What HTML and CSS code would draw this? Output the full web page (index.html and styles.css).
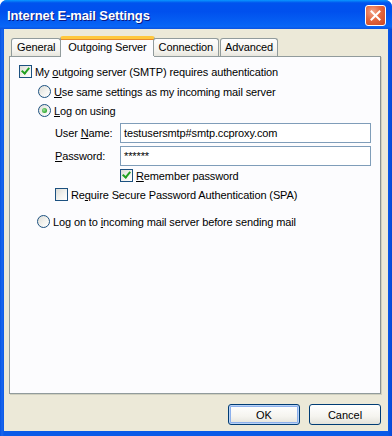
FILE: index.html
```html
<!DOCTYPE html>
<html lang="en">
<head>
    <meta charset="UTF-8">
    <title>Internet E-mail Settings</title>
    <link rel="stylesheet" href="styles.css">
</head>
<body>
    <div class="window">
        <div class="titlebar">
            <span class="title">Internet E-mail Settings</span>
            <button class="close-btn" aria-label="Close">
                <svg width="13" height="13" viewBox="0 0 13 13">
                    <path d="M2.5 2.5 L10.5 10.5 M10.5 2.5 L2.5 10.5" stroke="#fff" stroke-width="2" stroke-linecap="square"/>
                </svg>
            </button>
        </div>

        <div class="client">
            <div class="tabs">
                <div class="tab">General</div>
                <div class="tab active">Outgoing Server</div>
                <div class="tab">Connection</div>
                <div class="tab">Advanced</div>
            </div>

            <div class="panel">
                <label class="option">
                    <span class="checkbox checked"></span>
                    <span>My <u>o</u>utgoing server (SMTP) requires authentication</span>
                </label>

                <div class="group">
                    <label class="option">
                        <span class="radio"></span>
                        <span><u>U</u>se same settings as my incoming mail server</span>
                    </label>
                    <label class="option logon">
                        <span class="radio selected"></span>
                        <span><u>L</u>og on using</span>
                    </label>

                    <div class="fields">
                        <div class="field">
                            <span class="field-label">User <u>N</u>ame:</span>
                            <div class="textbox">testusersmtp#smtp.ccproxy.com</div>
                        </div>
                        <div class="field">
                            <span class="field-label"><u>P</u>assword:</span>
                            <div class="textbox">******</div>
                        </div>
                        <label class="option remember">
                            <span class="checkbox checked"></span>
                            <span><u>R</u>emember password</span>
                        </label>
                        <label class="option spa">
                            <span class="checkbox"></span>
                            <span>Re<u>q</u>uire Secure Password Authentication (SPA)</span>
                        </label>
                    </div>

                    <label class="option before">
                        <span class="radio"></span>
                        <span>Log on to <u>i</u>ncoming mail server before sending mail</span>
                    </label>
                </div>
            </div>

            <div class="buttons">
                <button class="btn default">OK</button>
                <button class="btn">Cancel</button>
            </div>
        </div>
    </div>
</body>
</html>
```

FILE: styles.css
```css
* {
    margin: 0;
    padding: 0;
    box-sizing: border-box;
}

body {
    background: #fff;
    font-family: "Liberation Sans", Arial, sans-serif;
    font-size: 11px;
    letter-spacing: -0.12px;
    color: #000;
}

u {
    text-decoration: underline;
    text-underline-offset: 1px;
}

.window {
    width: 392px;
    height: 436px;
    display: flex;
    flex-direction: column;
    background: linear-gradient(90deg, #0554e3 0, #1a66ee 2px, #0a5ae8 4px, #0a5ae8 388px, #0746d6 392px);
    border-radius: 7px 7px 0 0;
    overflow: hidden;
}

.titlebar {
    height: 29px;
    flex-shrink: 0;
    display: flex;
    align-items: center;
    justify-content: space-between;
    padding: 0 6px 0 7px;
    background: linear-gradient(#0997ff 0, #0053ee 10%, #0050ee 40%, #0663f5 85%, #0a66f6 92%, #0b52e0 100%);
}

.title {
    color: #fff;
    font-weight: bold;
    font-size: 13px;
    letter-spacing: -0.1px;
    text-shadow: 1px 1px #0a1883;
    padding-top: 1px;
}

.close-btn {
    width: 21px;
    height: 21px;
    border: 1px solid #fff;
    border-radius: 3px;
    background: radial-gradient(circle at 35% 30%, #f3a58b 0, #e3673f 45%, #cc4520 100%);
    display: flex;
    align-items: center;
    justify-content: center;
    margin-top: 1px;
}

.client {
    flex: 1;
    margin: 0 4px 5px 4px;
    background: #ece9d8;
    padding: 7px 7px 0 5px;
    display: flex;
    flex-direction: column;
}

.tabs {
    display: flex;
    align-items: flex-end;
    height: 21px;
    padding-left: 2px;
    position: relative;
    z-index: 1;
    margin-bottom: -1px;
}

.tab {
    height: 18px;
    padding: 2px 5px 0;
    border: 1px solid #919b9c;
    border-bottom: none;
    border-radius: 3px 3px 0 0;
    background: linear-gradient(#fefefe, #f4f3ee 70%, #e8e6de);
    margin-bottom: 1px;
    white-space: nowrap;
}

.tab + .tab {
    margin-left: 1px;
}

.tab:last-child {
    padding: 2px 4px 0;
}

.tab.active {
    height: 21px;
    margin: 0 -3px 0 -1px;
    padding: 0 7px;
    background: #fcfcfe;
    border-top: 3px solid #ffc83c;
    box-shadow: inset 0 1px #e68b2c;
    line-height: 16px;
}

.panel {
    height: 338px;
    flex-shrink: 0;
    background: #fcfcfe;
    border: 1px solid #919b9c;
    border-right-color: #8a9293;
    padding: 8px 9px;
    box-shadow: 1px 1px #d0d0bf;
}

.option {
    display: flex;
    align-items: center;
    gap: 3px;
    height: 13px;
    white-space: nowrap;
}

.group {
    padding-left: 19px;
    padding-top: 7px;
}

.group .option + .option {
    margin-top: 6px;
}

.checkbox {
    width: 13px;
    height: 13px;
    flex-shrink: 0;
    border: 1px solid #1c5180;
    background: linear-gradient(135deg, #dcdcd7 0, #f3f3ef 55%, #fff 100%);
    position: relative;
}

.checkbox.checked::after {
    content: "";
    position: absolute;
    left: 3px;
    top: 0;
    width: 3px;
    height: 6px;
    border: solid #21a121;
    border-width: 0 2px 2px 0;
    transform: rotate(40deg);
}

.radio {
    width: 13px;
    height: 13px;
    flex-shrink: 0;
    border: 1px solid #1c5180;
    border-radius: 50%;
    background: linear-gradient(135deg, #dcdcd7 0, #f3f3ef 55%, #fff 100%);
    position: relative;
}

.radio.selected::after {
    content: "";
    position: absolute;
    left: 3px;
    top: 3px;
    width: 5px;
    height: 5px;
    border-radius: 50%;
    background: radial-gradient(circle at 40% 40%, #a0e0a0 0, #3cb13c 60%, #1f8a1f 100%);
}

.fields {
    padding-left: 17px;
    padding-top: 6px;
}

.field {
    display: flex;
    align-items: center;
    height: 20px;
    margin-bottom: 3px;
}

.field-label {
    width: 65px;
    flex-shrink: 0;
}

.textbox {
    width: 253px;
    height: 20px;
    border: 1px solid #7f9db9;
    background: #fff;
    padding: 3px 0 0 3px;
    white-space: nowrap;
}

.option.remember {
    margin-left: 65px;
    margin-top: 2px;
}

.option.spa {
    margin-top: 4px;
}

.option.before {
    margin-top: 14px;
}

.group .option.before {
    margin-left: -1px;
}

.buttons {
    display: flex;
    justify-content: flex-end;
    gap: 9px;
    padding-top: 10px;
}

.btn {
    width: 72px;
    height: 21px;
    border: 1px solid #003c74;
    border-radius: 3px;
    background: linear-gradient(#fff 0, #f5f4ef 60%, #e3e2da 100%);
    font-family: inherit;
    font-size: 11px;
    color: #000;
}

.btn.default {
    box-shadow: inset 0 0 0 1px #bad3f6, inset 0 0 0 2px #8cb0ec;
}
```
